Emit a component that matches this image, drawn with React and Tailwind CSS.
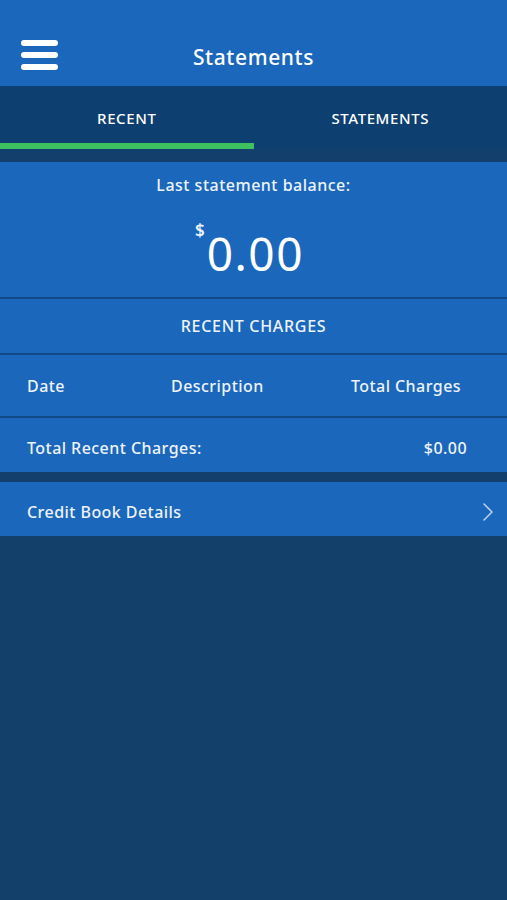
import React, { useState } from 'react';

const Row = ({ children, className = '' }) => (
  <div className={`flex items-center px-[27px] bg-[#1a67bb] text-[#eef3fa] ${className}`}>{children}</div>
);

const App = () => {
  const [tab, setTab] = useState('recent');

  return (
    <div className="min-h-[900px] bg-[#133f6b] font-['Noto_Sans',sans-serif] font-medium">
      {/* Top bar */}
      <div className="relative h-[86px] bg-[#1a67bb] flex items-end justify-center pb-[13px]">
        <button className="absolute left-[21px] top-[40px] flex flex-col gap-[6px]">
          <span className="block w-[37px] h-[6px] rounded-full bg-white" />
          <span className="block w-[37px] h-[6px] rounded-full bg-white" />
          <span className="block w-[37px] h-[6px] rounded-full bg-white" />
        </button>
        <h1 className="text-[21px] text-white tracking-[0.6px]">Statements</h1>
      </div>

      {/* Tabs */}
      <div className="bg-[#0d3f70]">
        <div className="flex h-[63px]">
          {['recent', 'statements'].map((t) => (
            <button
              key={t}
              onClick={() => setTab(t)}
              className="flex-1 flex flex-col justify-end"
            >
              <span className="flex-1 flex items-center justify-center pt-[7px] text-[15px] text-white uppercase tracking-[0.6px]">
                {t}
              </span>
              <span className={`block h-[6px] ${tab === t ? 'bg-[#3dc25f]' : 'bg-transparent'}`} />
            </button>
          ))}
        </div>
        <div className="h-[13px] bg-[#123f6b]" />
      </div>

      {/* Balance */}
      <div className="bg-[#1a67bb] h-[135px] flex flex-col items-center text-[#eef3fa]">
        <p className="mt-[11px] text-[16px] tracking-[0.5px]">Last statement balance:</p>
        <div className="mt-[28px] flex items-start mr-[8px]">
          <span className="text-[17px] leading-[20px] mt-[-4px] mr-[2px] font-semibold">$</span>
          <span className="text-[46px] leading-[56px] text-white font-normal tracking-[1.5px]">0.00</span>
        </div>
      </div>

      <div className="h-[2px] bg-[#0f4a86]" />
      <Row className="h-[54px] justify-center">
        <span className="text-[16px] tracking-[0.7px]">RECENT CHARGES</span>
      </Row>
      <div className="h-[2px] bg-[#0f4a86]" />
      <Row className="h-[61px] text-[16px] tracking-[0.45px]">
        <span className="w-[144px]">Date</span>
        <span className="flex-1">Description</span>
        <span className="mr-[19px]">Total Charges</span>
      </Row>
      <div className="h-[2px] bg-[#0f4a86]" />
      <Row className="h-[54px] text-[16px] tracking-[0.45px] justify-between pt-[5px]">
        <span>Total Recent Charges:</span>
        <span className="mr-[13px]">$0.00</span>
      </Row>
      <div className="h-[10px] bg-[#123f6b]" />
      <Row className="h-[54px] justify-between pr-[13px] pt-[5px]">
        <span className="text-[16px] tracking-[0.45px]">Credit Book Details</span>
        <svg width="12" height="20" viewBox="0 0 12 20" fill="none" stroke="#b9cfea" strokeWidth="1.6" strokeLinecap="round" strokeLinejoin="round">
          <path d="M2 2l8 8-8 8" />
        </svg>
      </Row>
    </div>
  );
};

export default App;
